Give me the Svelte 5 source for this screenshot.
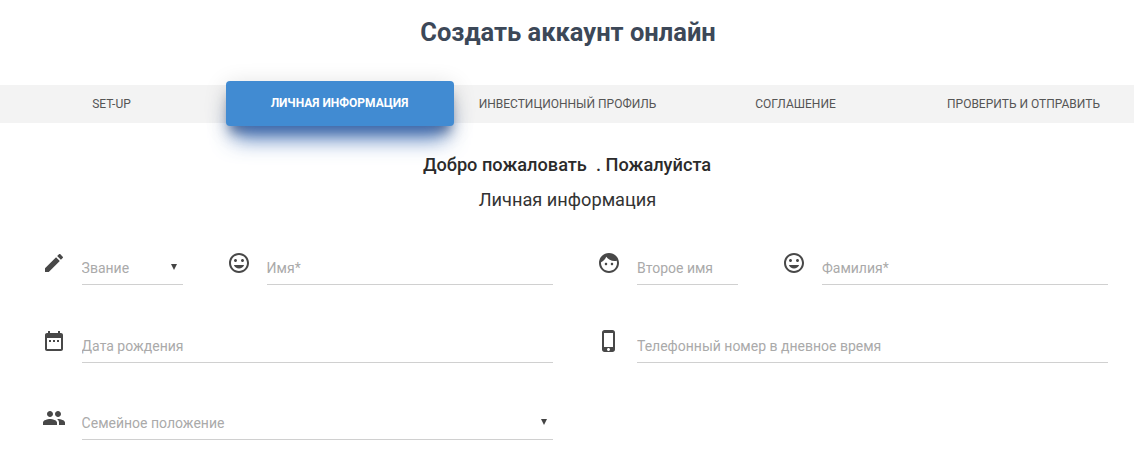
<script>
	const tabs = ['Set-up', 'Личная информация', 'Инвестиционный профиль', 'Соглашение', 'Проверить и отправить'];
	let active = $state(1);

	const icons = {
		edit: 'M3 17.25V21h3.75L17.81 9.94l-3.75-3.75L3 17.25zM20.71 7.04c.39-.39.39-1.02 0-1.41l-2.34-2.34c-.39-.39-1.02-.39-1.41 0l-1.83 1.83 3.75 3.75 1.83-1.83z',
		mood: 'M11.99 2C6.47 2 2 6.48 2 12s4.47 10 9.99 10C17.52 22 22 17.52 22 12S17.52 2 11.99 2zM12 20c-4.42 0-8-3.58-8-8s3.58-8 8-8 8 3.58 8 8-3.58 8-8 8zm3.5-9c.83 0 1.5-.67 1.5-1.5S16.33 8 15.5 8 14 8.67 14 9.5s.67 1.5 1.5 1.5zm-7 0c.83 0 1.5-.67 1.5-1.5S9.33 8 8.5 8 7 8.67 7 9.5 7.67 11 8.5 11zm3.5 6.5c2.33 0 4.31-1.46 5.11-3.5H6.89c.8 2.04 2.78 3.5 5.11 3.5z',
		face: 'M9 11.75c-.69 0-1.25.56-1.25 1.25s.56 1.25 1.25 1.25 1.25-.56 1.25-1.25-.56-1.25-1.25-1.25zm6 0c-.69 0-1.25.56-1.25 1.25s.56 1.25 1.25 1.25 1.25-.56 1.25-1.25-.56-1.25-1.25-1.25zM12 2C6.48 2 2 6.48 2 12s4.48 10 10 10 10-4.48 10-10S17.52 2 12 2zm0 18c-4.41 0-8-3.59-8-8 0-.29.02-.58.05-.86 2.36-1.05 4.23-2.98 5.21-5.37C11.07 8.33 14.05 10 17.42 10c.78 0 1.53-.09 2.25-.26.21.71.33 1.47.33 2.26 0 4.41-3.59 8-8 8z',
		date: 'M9 11H7v2h2v-2zm4 0h-2v2h2v-2zm4 0h-2v2h2v-2zm2-7h-1V2h-2v2H8V2H6v2H5c-1.11 0-1.99.9-1.99 2L3 20c0 1.1.89 2 2 2h14c1.1 0 2-.9 2-2V6c0-1.1-.9-2-2-2zm0 16H5V9h14v11z',
		phone: 'M15.5 1h-8C6.12 1 5 2.12 5 3.5v17C5 21.88 6.12 23 7.5 23h8c1.38 0 2.5-1.12 2.5-2.5v-17C18 2.12 16.88 1 15.5 1zm-4 21c-.83 0-1.5-.67-1.5-1.5s.67-1.5 1.5-1.5 1.5.67 1.5 1.5-.67 1.5-1.5 1.5zm4.5-4H7V4h9v14z',
		people: 'M16 11c1.66 0 2.99-1.34 2.99-3S17.66 5 16 5c-1.66 0-3 1.34-3 3s1.34 3 3 3zm-8 0c1.66 0 2.99-1.34 2.99-3S9.66 5 8 5C6.34 5 5 6.34 5 8s1.34 3 3 3zm0 2c-2.33 0-7 1.17-7 3.5V19h14v-2.5c0-2.33-4.67-3.5-7-3.5zm8 0c-.29 0-.62.02-.97.05 1.16.84 1.97 1.97 1.97 3.45V19h6v-2.5c0-2.33-4.67-3.5-7-3.5z'
	};
</script>

{#snippet icon(name)}
	<svg class="icon" viewBox="0 0 24 24" aria-hidden="true"><path d={icons[name]} /></svg>
{/snippet}

<div class="page">
	<h1>Создать аккаунт онлайн</h1>

	<nav class="steps">
		{#each tabs as tab, i}
			<button class="step" class:active={i === active} onclick={() => (active = i)}>{tab}</button>
		{/each}
	</nav>

	<p class="welcome">Добро пожаловать&nbsp; . Пожалуйста</p>
	<h2>Личная информация</h2>

	<form class="form">
		<div class="row">
			{@render icon('edit')}
			<div class="field short select">
				<select>
					<option>Звание</option>
				</select>
			</div>
			{@render icon('mood')}
			<div class="field"><input placeholder="Имя*" /></div>
		</div>
		<div class="row">
			{@render icon('face')}
			<div class="field short"><input placeholder="Второе имя" /></div>
			{@render icon('mood')}
			<div class="field"><input placeholder="Фамилия*" /></div>
		</div>
		<div class="row">
			{@render icon('date')}
			<div class="field"><input placeholder="Дата рождения" /></div>
		</div>
		<div class="row">
			{@render icon('phone')}
			<div class="field"><input placeholder="Телефонный номер в дневное время" /></div>
		</div>
		<div class="row">
			{@render icon('people')}
			<div class="field select">
				<select>
					<option>Семейное положение</option>
				</select>
			</div>
		</div>
	</form>
</div>

<style>
	:global(body) {
		background-color: #fff;
		font-family: Roboto, sans-serif;
	}

	.page {
		height: 467px;
		overflow: hidden;
	}

	h1 {
		margin: 0;
		padding: 17px 0 0 2px;
		font-size: 25.5px;
		line-height: 30px;
		font-weight: 700;
		text-align: center;
		color: #3c4858;
	}

	.steps {
		display: grid;
		grid-template-columns: repeat(5, 1fr);
		height: 38px;
		margin: 38px -4px 0 -2px;
		background-color: #f3f3f3;
	}

	.step {
		border: none;
		background: none;
		padding: 0 1px 4px 0;
		font-family: inherit;
		font-size: 12px;
		font-weight: 400;
		text-transform: uppercase;
		color: #555;
		cursor: pointer;
	}

	.step.active {
		height: 45px;
		margin-top: -4px;
		padding-bottom: 1px;
		border-radius: 4px;
		background-color: #418bd2;
		color: #fff;
		font-weight: 700;
		box-shadow:
			0 20px 22px -8px rgba(50, 105, 185, 0.85),
			0 10px 12px -5px rgba(25, 40, 80, 0.65),
			0 4px 23px rgba(0, 0, 0, 0.14);
		position: relative;
	}

	.welcome {
		margin: 31px 0 0;
		font-size: 18.2px;
		line-height: 22px;
		font-weight: 500;
		text-align: center;
		color: #2b2b2b;
	}

	h2 {
		margin: 13px 0 0;
		padding-left: 1px;
		font-size: 18.2px;
		line-height: 22px;
		font-weight: 400;
		text-align: center;
		color: #333;
	}

	.form {
		display: grid;
		grid-template-columns: 1fr 1fr;
		column-gap: 45.4px;
		row-gap: 36.5px;
		padding: 33px 26px 0 42.6px;
	}

	.row {
		display: flex;
		align-items: flex-start;
		height: 41px;
	}

	.icon {
		flex: none;
		width: 24px;
		height: 24px;
		margin: 7px 16px 0 -1px;
		fill: #484848;
	}

	.field {
		flex: 1;
		height: 41px;
		border-bottom: 1px solid #d0d0d0;
		box-sizing: border-box;
		position: relative;
	}

	.field.short {
		flex: none;
		width: 101px;
		margin-right: 45px;
	}

	input,
	select {
		display: block;
		width: 100%;
		height: 40px;
		padding: 8px 0 0;
		border: none;
		outline: none;
		background: transparent;
		font-family: inherit;
		font-size: 14px;
		color: #aaa;
		appearance: none;
		box-sizing: border-box;
	}

	input::placeholder {
		color: #aaa;
		opacity: 1;
	}

	.select::after {
		content: '';
		position: absolute;
		right: 6px;
		top: 20px;
		border-left: 3.5px solid transparent;
		border-right: 3.5px solid transparent;
		border-top: 6px solid #444;
		pointer-events: none;
	}
</style>
